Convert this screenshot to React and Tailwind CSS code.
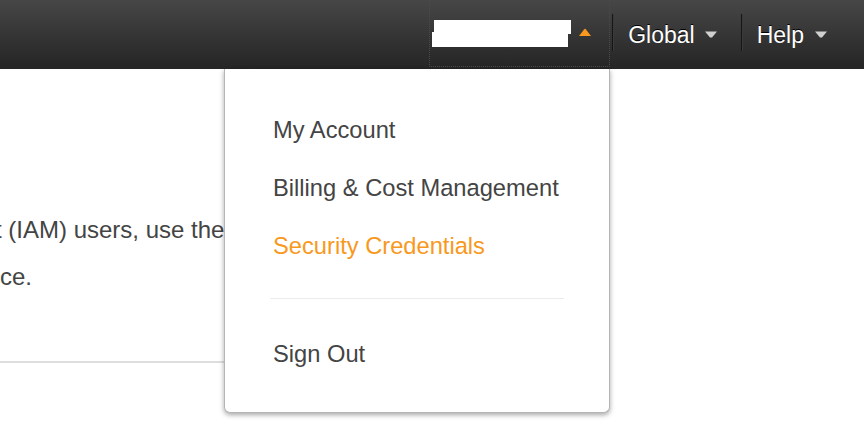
import React from 'react';

const MENU = [
  { label: 'My Account' },
  { label: 'Billing & Cost Management' },
  { label: 'Security Credentials', active: true },
];

function CaretDown() {
  return (
    <svg width="12" height="7" viewBox="0 0 12 7" className="block">
      <path d="M0 0.5 H12 L7 6.5 H5 Z" fill="#cfcfcf" />
    </svg>
  );
}

function CaretUp() {
  return (
    <svg width="12" height="8" viewBox="0 0 12 8" className="block">
      <path d="M0 8 L5 1.5 Q6 0.2 7 1.5 L12 8 Z" fill="#f8991d" />
    </svg>
  );
}

function Separator() {
  return (
    <div className="flex self-start mt-[14px] h-[37px]">
      <div className="w-px bg-[#161616]" />
      <div className="w-px bg-[#3a3a3a]" />
    </div>
  );
}

export default function App() {
  return (
    <div className="relative w-[864px] h-[440px] overflow-hidden bg-white font-['Liberation_Sans',Arial,sans-serif]">
      <header className="flex justify-end h-[69px] bg-gradient-to-b from-[#474747] to-[#252525]">
        {/* account button, name redacted */}
        <div className="flex items-center w-[181px] h-[67px] border-x border-b border-dotted border-[#4b4b4b] pl-[2px]">
          <div className="flex flex-col">
            <div className="w-[137px] h-[14px] ml-[2px] bg-white" />
            <div className="w-[136px] h-[15px] -mt-[2px] bg-white" />
          </div>
          <div className="ml-[8px] mb-[3px]">
            <CaretUp />
          </div>
        </div>
        <div className="w-[2px]" />
        <Separator />
        <button className="flex items-center pl-[14px] pr-[24px] text-[23px] text-white [text-shadow:0_-1px_0_#000]">
          <span className="pt-[1px]">Global</span>
          <span className="ml-[10px]">
            <CaretDown />
          </span>
        </button>
        <Separator />
        <button className="flex items-center pl-[14px] pr-[37px] text-[23px] text-white [text-shadow:0_-1px_0_#000]">
          <span className="pt-[1px]">Help</span>
          <span className="ml-[11px]">
            <CaretDown />
          </span>
        </button>
      </header>

      <main className="pt-[137px] text-[24px] leading-[47px] text-[#444] whitespace-nowrap">
        <p className="-ml-[5px]">t (IAM) users, use the IAM</p>
        <p>ce.</p>
        <div className="mt-[61px] w-[520px] h-[2px] bg-[#dedede]" />
      </main>

      <div className="absolute left-[224px] top-[69px] w-[386px] h-[344px] bg-white border-x border-b border-[#b5b5b5] rounded-b-[6px] shadow-[0_2px_5px_rgba(0,0,0,0.35)]">
        <ul className="pt-[32px] pl-[48px] text-[23.7px] leading-[58px]">
          {MENU.map((item) => (
            <li key={item.label} className={item.active ? 'text-[#f8991d]' : 'text-[#444]'}>
              {item.label}
            </li>
          ))}
        </ul>
        <div className="mt-[23px] ml-[45px] w-[294px] h-px bg-[#ebebeb]" />
        <div className="mt-[26px] pl-[48px] text-[23.7px] leading-[58px] text-[#444]">Sign Out</div>
      </div>
    </div>
  );
}
